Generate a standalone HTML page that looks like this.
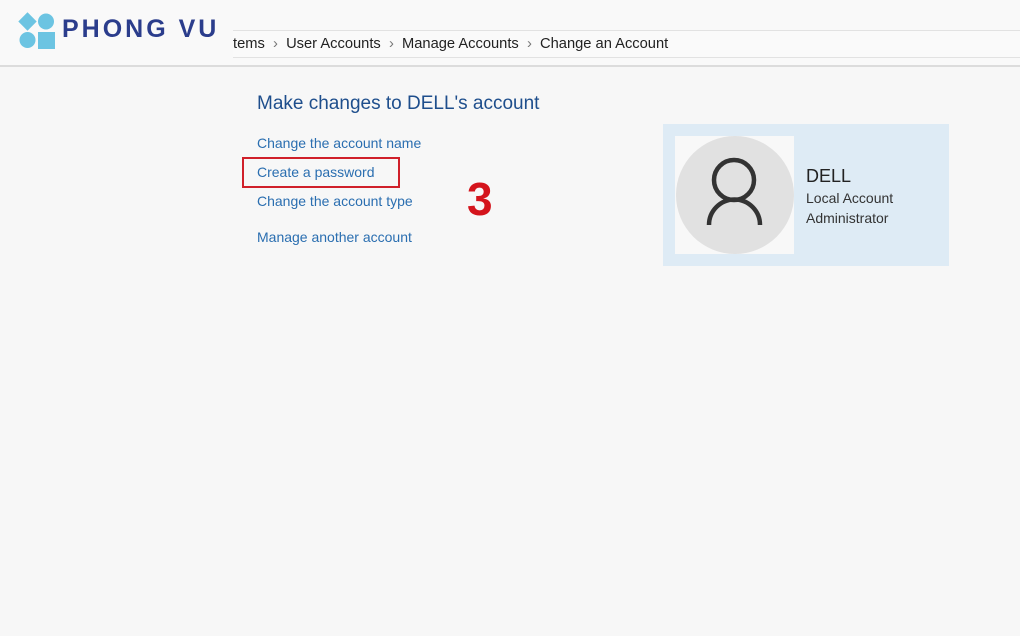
<!DOCTYPE html>
<html><head><style>
body{margin:0;width:1020px;height:636px;background:#f7f7f7;font-family:"Liberation Sans",sans-serif;position:relative;overflow:hidden}
.a{position:absolute;white-space:nowrap}
.l{color:#2a6eb0;font-size:14px}
</style></head><body>
<div class="a" style="left:0;top:0;width:1020px;height:65px;background:#f9f9f9;border-bottom:2px solid #dcdcdc"></div>
<div class="a" style="left:233px;top:30px;width:787px;height:26px;border-top:1px solid #e2e2e2;border-bottom:1px solid #e2e2e2;background:#fafafa"></div>
<div class="a" style="left:233px;top:36px;font-size:14.7px;color:#222">tems &nbsp;<span style="color:#777">›</span>&nbsp; User Accounts &nbsp;<span style="color:#777">›</span>&nbsp; Manage Accounts &nbsp;<span style="color:#777">›</span>&nbsp; Change an Account</div>
<svg class="a" style="left:17px;top:11px" width="40" height="40">
<rect x="4" y="4" width="13" height="13" fill="#6cc4e2" transform="rotate(45 10.5 10.5)"/>
<circle cx="29" cy="10.5" r="8" fill="#6cc4e2"/>
<circle cx="10.5" cy="29" r="8" fill="#6cc4e2"/>
<rect x="21" y="21" width="17" height="17" fill="#6cc4e2"/>
</svg>
<div class="a" style="left:62px;top:15px;font-size:25px;font-weight:bold;color:#2b3d8c;letter-spacing:3px">PHONG VU</div>
<div class="a" style="left:257px;top:93px;font-size:19px;color:#1e4e8c">Make changes to DELL's account</div>
<div class="a l" style="left:257px;top:135px">Change the account name</div>
<div class="a l" style="left:257px;top:164px">Create a password</div>
<div class="a" style="left:242px;top:157px;width:154px;height:27px;border:2px solid #d0202a"></div>
<div class="a l" style="left:257px;top:193px">Change the account type</div>
<div class="a l" style="left:257px;top:229px">Manage another account</div>
<div class="a" style="left:467px;top:172px;font-size:46px;font-weight:bold;color:#d4141c">3</div>
<div class="a" style="left:663px;top:124px;width:286px;height:142px;background:#deebf5"></div>
<div class="a" style="left:675px;top:136px;width:119px;height:118px;background:#f8f8f8"></div>
<div class="a" style="left:676px;top:136px;width:118px;height:118px;border-radius:50%;background:#e1e1e1"></div>
<svg class="a" style="left:676px;top:136px" width="118" height="118" fill="none" stroke="#333" stroke-width="4.5">
<circle cx="58" cy="44" r="20"/>
<path d="M33 89 A25.5 25.5 0 0 1 84 89"/>
</svg>
<div class="a" style="left:806px;top:166px;font-size:18px;color:#222">DELL</div>
<div class="a" style="left:806px;top:190px;font-size:14px;color:#333">Local Account</div>
<div class="a" style="left:806px;top:210px;font-size:14px;color:#333">Administrator</div>
</body></html>
